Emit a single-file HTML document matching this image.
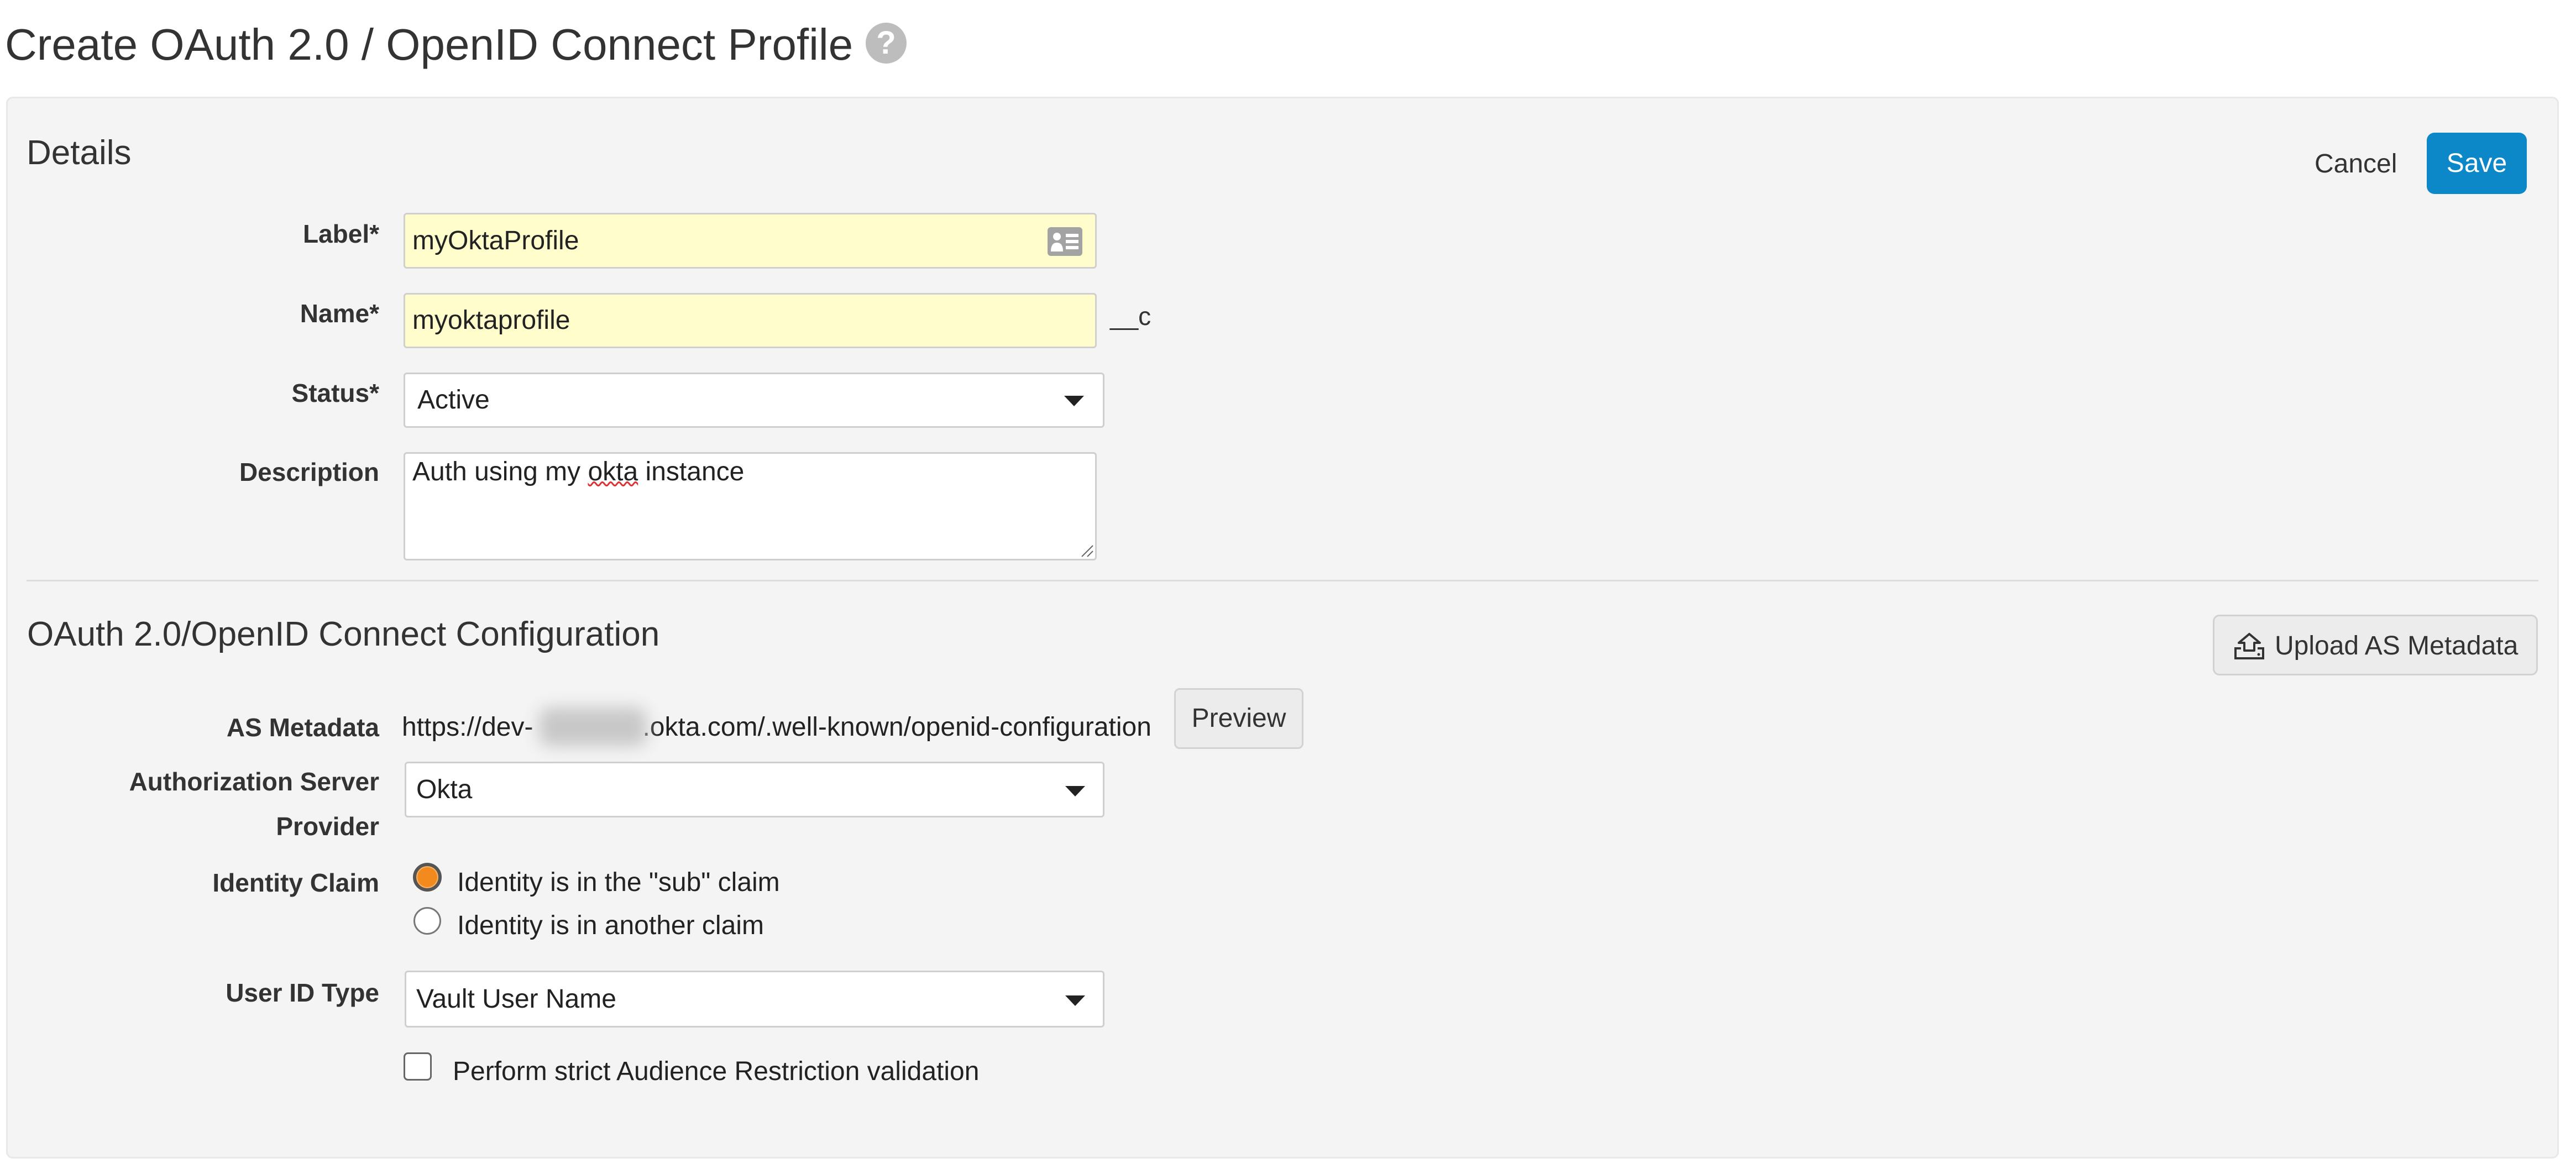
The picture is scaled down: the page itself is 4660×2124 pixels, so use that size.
<!DOCTYPE html>
<html><head><meta charset="utf-8"><style>
*{box-sizing:border-box;margin:0;padding:0}
body{width:4660px;height:2124px;background:#fff;position:relative;overflow:hidden;font-family:"Liberation Sans",Arial,sans-serif;color:#333}
.a{position:absolute;white-space:nowrap;line-height:1.15}
.lbl{position:absolute;right:3974px;font-weight:bold;font-size:46px;line-height:1.15;color:#333;white-space:nowrap;text-align:right}
.inp{position:absolute;border:3px solid #cfcfcf;border-radius:6px;font-size:48px;color:#222;padding-left:13px;white-space:nowrap}
.yel{background:#fefdcb}
.wh{background:#fff}
.arr{position:absolute;width:0;height:0;border-left:18px solid transparent;border-right:18px solid transparent;border-top:19px solid #222}
</style></head><body>
<div class="a" style="left:9px;top:35px;font-size:80px;color:#333">Create OAuth 2.0 / OpenID Connect Profile</div>
<div style="position:absolute;left:1566px;top:41px;width:74px;height:74px;border-radius:50%;background:#bdbdbd;color:#fff;font-weight:bold;font-size:58px;line-height:74px;text-align:center">?</div>

<div style="position:absolute;left:11px;top:175px;width:4618px;height:1921px;background:#f4f4f4;border:3px solid #e8e8e8;border-radius:12px"></div>

<div class="a" style="left:48px;top:241px;font-size:62px;color:#333">Details</div>
<div class="a" style="left:4187px;top:269px;font-size:48px;color:#333">Cancel</div>
<div style="position:absolute;left:4390px;top:240px;width:181px;height:111px;background:#0c87c8;border-radius:14px;color:#fff;font-size:48px;line-height:111px;text-align:center">Save</div>

<div class="lbl" style="top:397px">Label*</div>
<div class="inp yel" style="left:730px;top:385px;width:1254px;height:101px;line-height:95px">myOktaProfile</div>
<svg style="position:absolute;left:1895px;top:411px" width="63" height="52" viewBox="0 0 63 52"><rect x="0" y="0" width="63" height="52" rx="6" fill="#a3a3a3"/><circle cx="17" cy="17" r="7" fill="#fff"/><path d="M6 44 Q6 28 17 28 Q28 28 28 44 Z" fill="#fff"/><rect x="33" y="12" width="23" height="6" fill="#fff"/><rect x="33" y="23" width="23" height="6" fill="#fff"/><rect x="33" y="34" width="23" height="6" fill="#fff"/></svg>

<div class="lbl" style="top:541px">Name*</div>
<div class="inp yel" style="left:730px;top:530px;width:1254px;height:100px;line-height:94px">myoktaprofile</div>
<div class="a" style="left:2008px;top:546px;font-size:46px">__c</div>

<div class="lbl" style="top:685px">Status*</div>
<div class="inp wh" style="left:730px;top:674px;width:1268px;height:100px;line-height:94px;padding-left:22px">Active</div>
<div class="arr" style="left:1925px;top:716px"></div>

<div class="lbl" style="top:828px">Description</div>
<div class="inp wh" style="left:730px;top:818px;width:1254px;height:196px;padding-top:5px;line-height:1.15">Auth using my <span style="text-decoration:underline wavy #e03030;text-decoration-thickness:3px">okta</span> instance</div>
<svg style="position:absolute;left:1955px;top:985px" width="24" height="24"><path d="M2 22 L22 2 M12 22 L22 12" stroke="#666" stroke-width="2"/></svg>

<div style="position:absolute;left:48px;top:1049px;width:4544px;height:3px;background:#dcdcdc"></div>

<div class="a" style="left:49px;top:1112px;font-size:62px">OAuth 2.0/OpenID Connect Configuration</div>
<div style="position:absolute;left:4003px;top:1112px;width:588px;height:110px;background:#ececec;border:3px solid #d2d2d2;border-radius:12px"></div>
<svg style="position:absolute;left:4040px;top:1143px" width="58" height="52" viewBox="0 0 58 52"><path d="M29 4 L48 20 L38 20 L38 34 L20 34 L20 20 L10 20 Z" fill="none" stroke="#333" stroke-width="4" stroke-linejoin="round"/><path d="M14 30 L4 30 L4 48 L54 48 L54 30 L44 30" fill="none" stroke="#333" stroke-width="4"/><circle cx="46" cy="41" r="2.5" fill="#333"/></svg>
<div class="a" style="left:4115px;top:1141px;font-size:48px;color:#333">Upload AS Metadata</div>

<div class="lbl" style="top:1290px">AS Metadata</div>
<div class="a" style="left:727px;top:1288px;font-size:48px;color:#222">https://dev-<span style="display:inline-block;width:198px;height:10px"></span>.okta.com/.well-known/openid-configuration</div>
<div style="position:absolute;left:975px;top:1280px;width:195px;height:70px;background:#c8c8c8;filter:blur(14px);border-radius:20px"></div>
<div style="position:absolute;left:2124px;top:1245px;width:234px;height:110px;background:#ececec;border:3px solid #d2d2d2;border-radius:10px;font-size:48px;line-height:104px;text-align:center;color:#333">Preview</div>

<div class="lbl" style="top:1388px">Authorization Server</div>
<div class="lbl" style="top:1469px">Provider</div>
<div class="inp wh" style="left:732px;top:1378px;width:1266px;height:101px;line-height:95px;padding-left:18px">Okta</div>
<div class="arr" style="left:1927px;top:1422px"></div>

<div class="lbl" style="top:1571px">Identity Claim</div>
<div style="position:absolute;left:747px;top:1561px;width:52px;height:52px;border-radius:50%;background:#f28a1e;border:6px solid #555;box-shadow:inset 0 0 0 2px #f9b566"></div>
<div class="a" style="left:827px;top:1569px;font-size:48px;color:#222">Identity is in the "sub" claim</div>
<div style="position:absolute;left:748px;top:1641px;width:50px;height:50px;border-radius:50%;background:#fff;border:3px solid #777"></div>
<div class="a" style="left:827px;top:1647px;font-size:48px;color:#222">Identity is in another claim</div>

<div class="lbl" style="top:1770px">User ID Type</div>
<div class="inp wh" style="left:732px;top:1756px;width:1266px;height:103px;line-height:97px;padding-left:18px">Vault User Name</div>
<div class="arr" style="left:1927px;top:1801px"></div>

<div style="position:absolute;left:730px;top:1904px;width:51px;height:51px;border-radius:8px;background:#fff;border:3px solid #666"></div>
<div class="a" style="left:819px;top:1911px;font-size:48px;color:#222">Perform strict Audience Restriction validation</div>
</body></html>
